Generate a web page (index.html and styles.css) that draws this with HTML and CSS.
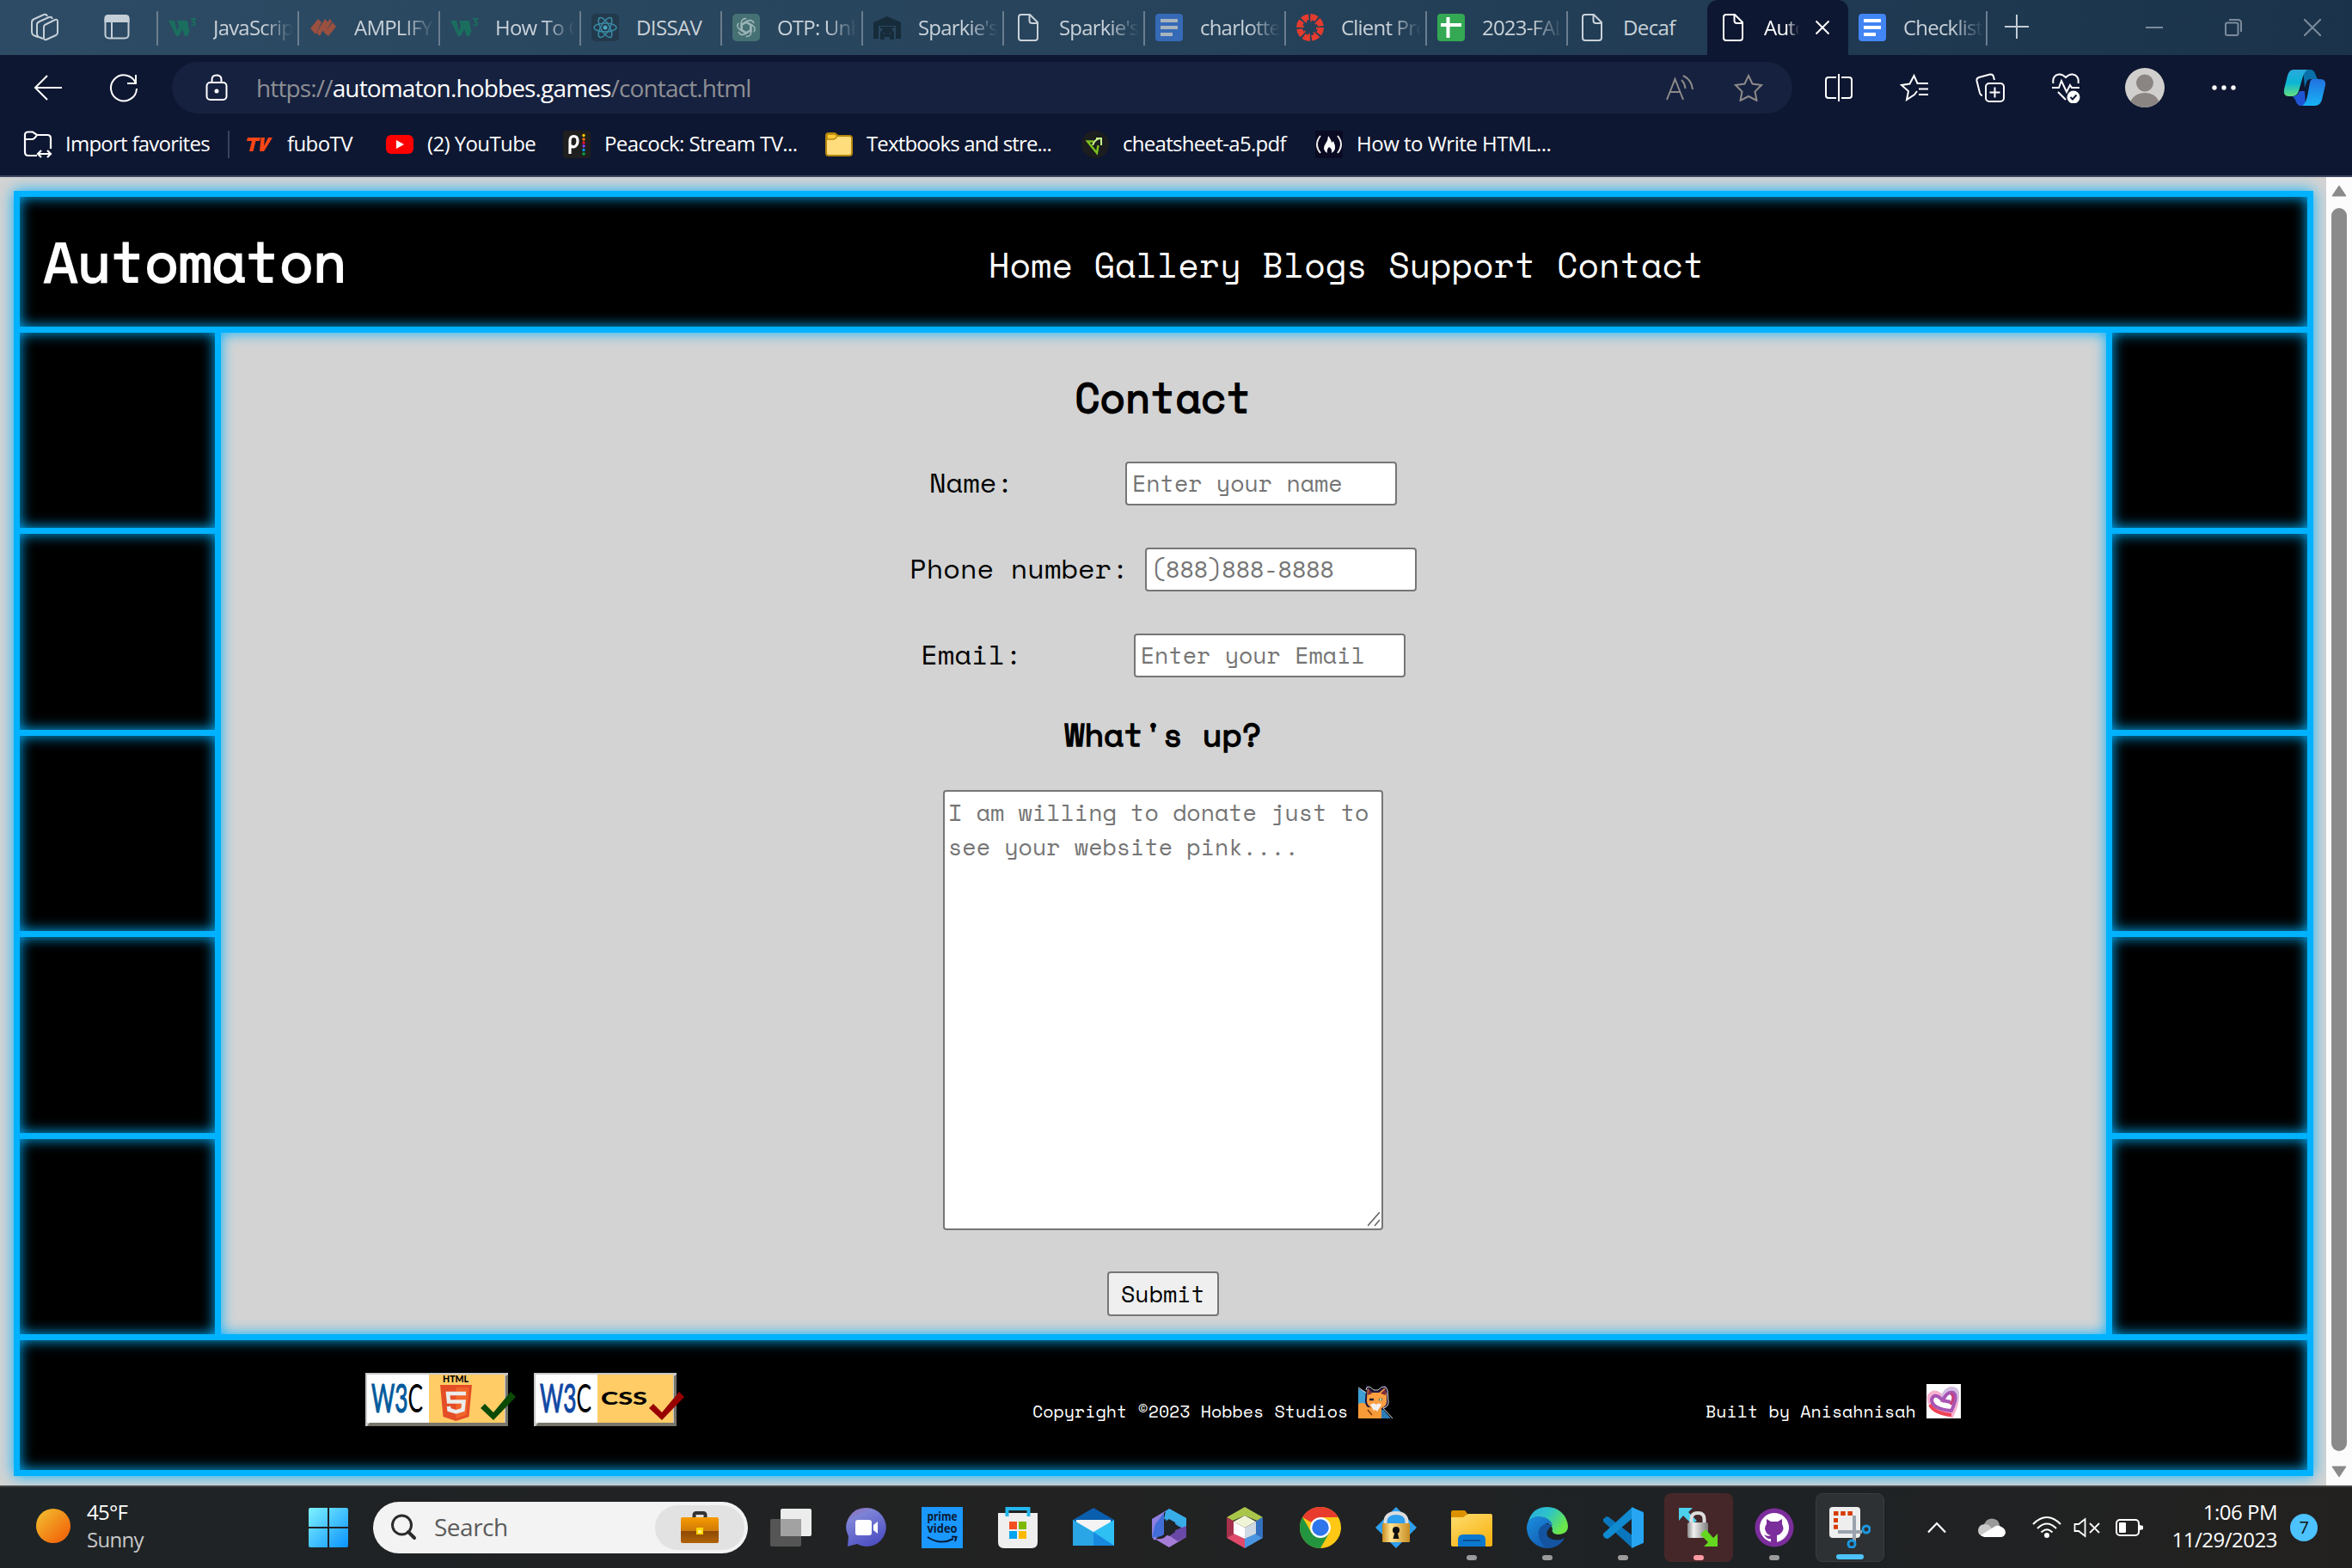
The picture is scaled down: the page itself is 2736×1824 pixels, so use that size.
FILE: index.html
```html
<!DOCTYPE html>
<html lang="en">
<head>
<meta charset="utf-8">
<title>Automaton - Contact</title>
<link rel="stylesheet" href="styles.css">
</head>
<body>
<svg class="defs" width="0" height="0">
  <defs>
    <symbol id="page" viewBox="0 0 24 32"><path d="M4 1H14L23 10V28Q23 31 20 31H4Q1 31 1 28V4Q1 1 4 1ZM13.500 1V8Q13.500 11 16.500 11H23" fill="none" stroke="currentColor" stroke-width="2"/></symbol>
    <symbol id="docs" viewBox="0 0 32 32"><rect width="32" height="32" rx="4" fill="#4285f4"/><path d="M6 8H26M6 16H26M6 24H20" stroke="#fff" stroke-width="4"/></symbol>
    <symbol id="w3" viewBox="0 0 32 32"><path d="M0 8H7L10 20L12 14L10 8H22L24 20L26 17L22 26L19 26L16 18L12 26H9Z" fill="#1a6e5e"/><path d="M26 6H31L28.500 9.500Q31 10 31 12Q30 14 26.500 13" fill="none" stroke="#1a6e5e" stroke-width="1.800"/></symbol>
    <linearGradient id="win" x2="1" y2="1"><stop stop-color="#7ff2ff"/><stop offset="1" stop-color="#0a93ff"/></linearGradient>
    <linearGradient id="sun" x2="1" y2="1"><stop stop-color="#f2c432"/><stop offset=".8" stop-color="#f26c0d"/></linearGradient>
    <linearGradient id="edgeTop" x2="1" y2=".5"><stop stop-color="#2ba9e0"/><stop offset=".5" stop-color="#2cc3c8"/><stop offset="1" stop-color="#6be84a"/></linearGradient>
    <linearGradient id="edgeLow" x2="1" y2="1"><stop stop-color="#1a8fe0"/><stop offset="1" stop-color="#114a9e"/></linearGradient>
    <linearGradient id="cpA" x2="0" y2="1"><stop stop-color="#2aa8dc"/><stop offset=".5" stop-color="#0bb5d5"/><stop offset="1" stop-color="#66e07e"/></linearGradient>
    <linearGradient id="cpB" x2="0" y2="1"><stop stop-color="#2272df"/><stop offset="1" stop-color="#17b4f6"/></linearGradient>
    <linearGradient id="gold" x2="1" y2="0"><stop stop-color="#c98a1c"/><stop offset=".3" stop-color="#ffe393"/><stop offset="1" stop-color="#c78d22"/></linearGradient>
    <linearGradient id="steel" x2="1" y2="0"><stop stop-color="#8b8b8b"/><stop offset=".3" stop-color="#f1f1f1"/><stop offset="1" stop-color="#7c7c7c"/></linearGradient>
    <linearGradient id="chat" x2=".5" y2="1"><stop stop-color="#9a68a8"/><stop offset=".3" stop-color="#7d83d6"/><stop offset="1" stop-color="#5052c4"/></linearGradient>
    <linearGradient id="case" x2="0" y2="1"><stop stop-color="#f89a00"/><stop offset=".52" stop-color="#cf7b08"/><stop offset=".54" stop-color="#8f4a03"/><stop offset="1" stop-color="#b06207"/></linearGradient>
    <linearGradient id="fold" x2=".7" y2="1"><stop stop-color="#ffdd70"/><stop offset="1" stop-color="#f8b414"/></linearGradient>
  </defs>
</svg>

<header class="browser">
  <div class="tabs">
    <div class="tools">
      <svg width="34" height="34" viewBox="0 0 34 34" class="line"><path d="M9 28L4 26Q2 25 2 22V11Q2 8 5 7L16 2Q19 1 20 4M15 30L10 28Q8 27 8 24V14Q8 11 11 10L22 5Q25 4 26 7M17 14L29 8Q32 7 32 10V23Q32 25 30 26L19 31Q16 32 16 29V17Q16 15 17 14Z"/></svg>
      <svg width="30" height="30" viewBox="0 0 30 30" class="line"><rect x="1.500" y="1.500" width="27" height="26" rx="4"/><path d="M1.500 4Q1.500 1 5 1H25Q28.500 1 28.500 4V8H1.500Z" fill="currentColor"/><path d="M9 8V28"/></svg>
    </div>
    <div class="tab dim"><svg class="fav"><use href="#w3"/></svg><span class="fade">JavaScrip</span></div>
    <div class="tab dim"><svg class="fav" viewBox="0 0 32 32"><g fill="#9a5040"><path d="M10 6L14 10L7 24L1 17Z"/><path d="M18 6L21 9L12 26L8 22Z"/><path d="M27 10L31 15L22 26L17 22Z"/><path d="M24 6L26 9L18 22L14 18Z"/></g></svg><span class="fade">AMPLIFY</span></div>
    <div class="tab dim"><svg class="fav"><use href="#w3"/></svg><span class="fade">How To C</span></div>
    <div class="tab dim"><svg class="fav" viewBox="0 0 32 32"><rect width="32" height="32" rx="5" fill="#233a4c"/><g fill="none" stroke="#3a8aa5" stroke-width="1.500"><ellipse cx="16" cy="16" rx="13" ry="5"/><ellipse cx="16" cy="16" rx="13" ry="5" transform="rotate(60 16 16)"/><ellipse cx="16" cy="16" rx="13" ry="5" transform="rotate(120 16 16)"/></g><circle cx="16" cy="16" r="2.500" fill="#4ba3bd"/></svg><span>DISSAV</span></div>
    <div class="tab dim"><svg class="fav" viewBox="0 0 32 32"><rect width="32" height="32" rx="5" fill="#467174"/><g fill="none" stroke="#9cb5b8" stroke-width="1.600"><path id="petal" d="M16 10L21 13V20L15 23.500Q9 26 7 21"/><use href="#petal" transform="rotate(60 16 16)"/><use href="#petal" transform="rotate(120 16 16)"/><use href="#petal" transform="rotate(180 16 16)"/><use href="#petal" transform="rotate(240 16 16)"/><use href="#petal" transform="rotate(300 16 16)"/></g></svg><span class="fade">OTP: Unb</span></div>
    <div class="tab dim"><svg class="fav" viewBox="0 0 32 32"><path d="M0 10L16 3L32 10V29H26V14H6V29H0Z" fill="#172c3b"/><path d="M8 16H24M9 29V22L12 18H20L23 22V29H20V26H12V29Z" fill="#172c3b" stroke="#172c3b" stroke-width="2"/><path d="M12 23H13M19 23H20" stroke="#28465b" stroke-width="2"/></svg><span class="fade">Sparkie's</span></div>
    <div class="tab dim"><svg class="fav pg"><use href="#page"/></svg><span class="fade">Sparkie's</span></div>
    <div class="tab dim"><svg class="fav half"><use href="#docs"/></svg><span class="fade">charlotte</span></div>
    <div class="tab dim"><svg class="fav" viewBox="0 0 32 32"><circle cx="16" cy="16" r="12.500" fill="none" stroke="#e43b2e" stroke-width="7" stroke-dasharray="7.800 2"/><circle cx="16" cy="16" r="8" fill="none" stroke="#e43b2e" stroke-width="2" stroke-dasharray="2 4.300"/></svg><span class="fade">Client Pro</span></div>
    <div class="tab dim"><svg class="fav" viewBox="0 0 32 32"><rect width="32" height="32" rx="4" fill="#34a853"/><path d="M12.500 4V28M4 13H28" stroke="#fff" stroke-width="4"/></svg><span class="fade">2023-FAL</span></div>
    <div class="tab dim"><svg class="fav pg"><use href="#page"/></svg><span>Decaf</span></div>
    <div class="tab active"><svg class="fav pg"><use href="#page"/></svg><span class="fade short">Auto</span><svg width="18" height="18" viewBox="0 0 18 18"><path d="M1.500 1.500L16.500 16.500M16.500 1.500L1.500 16.500" stroke="#fff" stroke-width="2"/></svg></div>
    <div class="tab dim last"><svg class="fav"><use href="#docs"/></svg><span class="fade">Checklist</span></div>
    <div class="plus"><svg width="28" height="28" viewBox="0 0 28 28"><path d="M14 0V28M0 14H28" stroke="#c3ccd4" stroke-width="2"/></svg></div>
    <div class="window">
      <svg width="20" height="20" viewBox="0 0 20 20"><path d="M0 10H20"/></svg>
      <svg width="20" height="20" viewBox="0 0 20 20"><rect x="1" y="4.500" width="14.500" height="14.500" rx="2"/><path d="M5 1H15Q19 1 19 5V15"/></svg>
      <svg width="20" height="20" viewBox="0 0 20 20"><path d="M0 0L20 20M20 0L0 20"/></svg>
    </div>
  </div>

  <div class="toolbar">
    <svg class="back" width="34" height="30" viewBox="0 0 34 30"><path d="M16 1L2 15L16 29M2 15H33"/></svg>
    <svg class="reload" width="34" height="34" viewBox="0 0 34 34"><path d="M31 12A15 15 0 1 0 32 18M31 2V12H21"/></svg>
    <div class="address">
      <svg class="lock" width="26" height="32" viewBox="0 0 26 32"><rect x="1.500" y="10" width="23" height="20" rx="4"/><path d="M7.500 10V6.500Q7.500 1.500 13 1.500T18.500 6.500V10"/><circle cx="13" cy="20" r="1.500" fill="#fff"/></svg>
      <p>https://<b>automaton.hobbes.games</b>/contact.html</p>
      <svg width="32" height="30" viewBox="0 0 32 30"><path d="M1 29L10.500 5L20 29M4.500 20H16.500M18 6Q22 10 22.500 16M20 1Q30 6 31 17"/></svg>
      <svg width="34" height="32" viewBox="0 0 34 32"><path d="M17 2L21.500 11.500L32 13L24.500 20.500L26.500 31L17 26L7.500 31L9.500 20.500L2 13L12.500 11.500Z"/></svg>
    </div>
    <div class="actions">
      <svg width="32" height="32" viewBox="0 0 32 32"><path d="M13 4H4Q1 4 1 7V25Q1 28 4 28H13M19 4H28Q31 4 31 7V25Q31 28 28 28H19M16 0V32"/></svg>
      <svg width="34" height="32" viewBox="0 0 34 32"><path d="M20 20L17 24L8 30L10 20L2 13L11.500 11.500L16.500 2L20.500 11H33M22 17.500H33M22 24H33"/></svg>
      <svg width="34" height="34" viewBox="0 0 34 34"><rect x="12" y="12" width="21" height="21" rx="4"/><path d="M22.500 16.500V28.500M16.500 22.500H28.500M8 26Q6 26 5 23L1.500 9Q1 6 4 5L17 1.500Q20 1 21 4L22 8"/></svg>
      <svg width="34" height="36" viewBox="0 0 34 36"><path d="M2.500 13Q1 4 9 2.500Q13 2 17 6Q21 2 25 2.500Q33 4 31.500 13M1 18H9L12 10L18 23L22 15L24 18H33M8 23L17 32"/><circle cx="26" cy="29" r="7.500" fill="#fff" stroke="none"/><path d="M22.500 29L25 31.500L29.500 26.500" stroke="#0e1731"/></svg>
      <svg width="46" height="46" viewBox="0 0 46 46"><clipPath id="av"><circle cx="23" cy="23" r="23"/></clipPath><g clip-path="url(#av)" stroke="none"><rect width="46" height="46" fill="#d1cfcd"/><circle cx="23" cy="17.500" r="10" fill="#8a8582"/><ellipse cx="23" cy="43" rx="17" ry="14" fill="#8a8582"/></g></svg>
      <svg width="28" height="6" viewBox="0 0 28 6"><g fill="#fff" stroke="none"><circle cx="3" cy="3" r="2.700"/><circle cx="14" cy="3" r="2.700"/><circle cx="25" cy="3" r="2.700"/></g></svg>
      <svg width="50" height="44" viewBox="0 0 50 44"><g stroke="none"><path d="M23 1H32Q36 1 38 8L40 12H32Q28 12 27 16L25 22Z" fill="#0a6fa8"/><path d="M12 1H28Q24 4 22 12L18 26Q16 32 10 32H6Q0 32 1 24L5 8Q7 1 12 1Z" fill="url(#cpA)"/><path d="M11 32Q17 32 19 26L25 26L26 43H20Q16 43 14 36Z" fill="#1f55d4"/><path d="M34 12H43Q50 12 49 19L45 36Q43 43 37 43H22Q26 41 28 32L31 16Q32 12 34 12Z" fill="url(#cpB)"/></g></svg>
    </div>
  </div>

  <div class="bookmarks">
    <div class="bm first"><svg width="34" height="32" viewBox="0 0 34 32"><path d="M16 29H6Q2 29 2 25V5Q2 1.500 6 1.500H11L16 5H28Q32 5 32 9V21M2 10H10Q13 10 16 5M17 27H32M21 23L17 27L21 31M28 23L32 27L28 31" fill="none" stroke="#fff" stroke-width="2.200"/></svg><span>Import favorites</span></div>
    <div class="bm w2"><svg width="32" height="32" viewBox="0 0 32 32"><path d="M2 8H17L16 12H11.500L8.500 24H4L7 12H1ZM17.500 8H22L21 18L26 8H31L21 24H16Z" fill="#fa4616"/></svg><span>fuboTV</span></div>
    <div class="bm w3"><svg width="32" height="32" viewBox="0 0 32 32"><rect y="5" width="32" height="22" rx="6" fill="#f00"/><path d="M12 11V21L21 16Z" fill="#fff"/></svg><span>(2) YouTube</span></div>
    <div class="bm w4"><svg width="32" height="32" viewBox="0 0 32 32"><rect width="32" height="32" rx="3" fill="#1f1f1f"/><path d="M8 27V12Q8 6.500 12.500 6.500T17 12T12.500 19Q10 19 9 17" fill="none" stroke="#fff" stroke-width="3.200"/><g><circle cx="24" cy="5.500" r="1.700" fill="#fc0"/><circle cx="24" cy="10" r="1.700" fill="#f70"/><circle cx="24" cy="14" r="1.700" fill="#e13"/><circle cx="24" cy="18" r="1.700" fill="#84f"/><circle cx="24" cy="22.500" r="1.700" fill="#09d"/><circle cx="24" cy="27" r="1.700" fill="#0a4"/></g></svg><span>Peacock: Stream TV...</span></div>
    <div class="bm w5"><svg width="32" height="32" viewBox="0 0 32 32"><path d="M4 3H11L15 6H28Q31 6 31 9V26Q31 29 28 29H4Q1 29 1 26V6Q1 3 4 3Z" fill="#ffdc7c" stroke="#b4870d" stroke-width="2"/><path d="M2 4H11L14 6Q12 10 9 10H2Z" fill="#ffca35" stroke="#b4870d" stroke-width="1.500"/></svg><span>Textbooks and stre...</span></div>
    <div class="bm w6"><svg width="32" height="32" viewBox="0 0 32 32"><circle cx="16" cy="16" r="16" fill="#1b1d1e"/><path d="M14 12.500H7L18 26L19.500 17" fill="none" stroke="#7cc220" stroke-width="2.400"/><path d="M13 17Q15 10 22 9M17 9H23V17" fill="none" stroke="#c8f090" stroke-width="2"/></svg><span>cheatsheet-a5.pdf</span></div>
    <div class="bm"><svg width="32" height="32" viewBox="0 0 32 32"><rect width="32" height="32" fill="#0a0a23"/><path d="M6 6Q-2 16 6 26M26 6Q34 16 26 26" fill="none" stroke="#eee" stroke-width="2"/><path d="M15 6Q19 11 19 14L21 12Q26 22 19 26Q20 21 16 19Q13 22 14 26Q7 22 12 15Q15 11 15 6Z" fill="#fff"/></svg><span>How to Write HTML...</span></div>
  </div>
</header>

<div class="viewport">
  <div class="frame">
    <header class="site-head">
      <h1>Automaton</h1>
      <nav><a>Home</a> <a>Gallery</a> <a>Blogs</a> <a>Support</a> <a>Contact</a></nav>
    </header>
    <aside><i></i><i></i><i></i><i></i><i></i></aside>
    <main>
      <h2>Contact</h2>
      <form>
        <div class="row wide"><label for="n">Name:</label><input id="n" placeholder="Enter your name"></div>
        <div class="row"><label for="p">Phone number:</label><input id="p" placeholder="(888)888-8888"></div>
        <div class="row wide"><label for="e">Email:</label><input id="e" placeholder="Enter your Email"></div>
        <h3>What's up?</h3>
        <div class="message"><textarea placeholder="I am willing to donate just to see your website pink...."></textarea><svg class="grip" width="14" height="17" viewBox="0 0 14 17"><path d="M0 16L14 0M8 16L14 9" stroke="#666" stroke-width="1.600"/></svg></div>
        <button type="button">Submit</button>
      </form>
    </main>
    <aside><i></i><i></i><i></i><i></i><i></i></aside>
    <footer>
      <div class="badges">
        <svg width="176" height="62" viewBox="0 0 176 62"><rect width="166" height="62" fill="#c9c9c9"/><path d="M2 62H166V2L163 4V58H5Z" fill="#77756c"/><rect x="2" y="2" width="72" height="56" fill="#fff"/><rect x="74" y="2" width="88" height="56" fill="#fc6"/><text x="7" y="46" class="w3c" textLength="60" lengthAdjust="spacingAndGlyphs" fill="#005a9c" stroke="#005a9c">W3<tspan fill="#000" stroke="none">C</tspan></text><text x="90" y="11" class="htm" textLength="30" lengthAdjust="spacingAndGlyphs">HTML</text><path d="M87 14H124L120.500 51L105.500 56L90.500 51Z" fill="#e44d26"/><path d="M105.500 17H120.500L117.500 49L105.500 53Z" fill="#f16529"/><path d="M117 24H96L97 33.500H114.500L113.500 43L105.500 45.500L97.500 43L97 39" fill="none" stroke="#ebebeb" stroke-width="4.500"/><path d="M134 41L139 36L149 46L169 22L175 28L149 55Z" fill="#0b4a05"/></svg>
        <svg width="176" height="62" viewBox="0 0 176 62"><rect width="166" height="62" fill="#c9c9c9"/><path d="M2 62H166V2L163 4V58H5Z" fill="#77756c"/><rect x="2" y="2" width="72" height="56" fill="#fff"/><rect x="74" y="2" width="88" height="56" fill="#fc6"/><text x="7" y="46" class="w3c" textLength="60" lengthAdjust="spacingAndGlyphs" fill="#1048a4" stroke="#1048a4">W3<tspan fill="#000" stroke="none">C</tspan></text><text x="78" y="37" class="css" textLength="54" lengthAdjust="spacingAndGlyphs">CSS</text><path d="M134 41L139 36L149 46L169 22L175 28L149 55Z" fill="#900"/></svg>
      </div>
      <div class="credit">Copyright ©2023 Hobbes Studios <svg width="40" height="40" viewBox="0 0 40 40"><path d="M0 5L10 10L14 38H0Z" fill="#3e9fd6"/><path d="M27 27L38 40H24Z" fill="#2b7cb8"/><path d="M0 23Q8 20 13 27L27 40H0Z" fill="#f79a38"/><path d="M10 3L16 9H24L31 3L34 12V21Q34 28 22 31Q8 28 9 18Z" fill="#ff9f41" stroke="#201840" stroke-width="2"/><path d="M11 27L27 28V40H11Z" fill="#f79a38"/><path d="M9 7Q10 -1 18 7H23Q31 -1 34 7L35 20Q36 26 29 28L40 40M0 4L9 10" fill="none" stroke="#ddd" stroke-width="1"/><path d="M12 5L16 11L11 13ZM32 5L26 11L32 13Z" fill="#7c2f3c"/><path d="M13 18H18M24 18H28" stroke="#282334" stroke-width="2.500"/><circle cx="26" cy="18" r="1.500" fill="#bde0a0"/><path d="M14 24Q18 21 21 24Q24 21 27 24L22 32L20 30L18 31Z" fill="#f3f0f0"/><path d="M11 30L16 36" stroke="#7a3b12" stroke-width="1.500"/></svg></div>
      <div class="credit built">Built by Anisahnisah <svg width="40" height="40" viewBox="0 0 40 40"><rect width="40" height="40" fill="#fff"/><path d="M19 17Q10 6 4 14Q1 28 29 36Q39 15 32 7Q25 3 19 17Z" fill="none" stroke="#f8b1d0" stroke-width="6"/><path d="M18 18Q24 3 33 7Q37 10 33 21" fill="none" stroke="#d2bde2" stroke-width="6"/><path d="M4 24Q9 34 29 36" fill="none" stroke="#ee4456" stroke-width="4"/><path d="M19 19Q9 9 6 18Q6 29 29 31Q37 14 31 10Q24 8 19 19L28 21" fill="none" stroke="#a855b4" stroke-width="4"/><path d="M28 11Q34 14 28 24" fill="none" stroke="#c83f78" stroke-width="3"/></svg></div>
    </footer>
  </div>
  <div class="scroll">
    <svg width="18" height="14" viewBox="0 0 18 14"><path d="M9 1L17 13H1Z" fill="#8a8a8a" stroke="#8a8a8a" stroke-linejoin="round"/></svg>
    <div class="thumb"></div>
    <svg width="18" height="14" viewBox="0 0 18 14"><path d="M9 13L17 1H1Z" fill="#8a8a8a" stroke="#8a8a8a" stroke-linejoin="round"/></svg>
  </div>
</div>

<footer class="taskbar">
  <div class="weather"><svg width="40" height="40" viewBox="0 0 40 40"><circle cx="20" cy="20" r="20" fill="url(#sun)"/></svg><p>45°F<br><span>Sunny</span></p></div>
  <svg class="start" width="46" height="46" viewBox="0 0 46 46"><path d="M2 0H22V22H0V2Q0 0 2 0ZM24 0H44Q46 0 46 2V22H24ZM0 24H22V46H2Q0 46 0 44ZM24 24H46V44Q46 46 44 46H24Z" fill="url(#win)"/></svg>
  <div class="search">
    <svg width="30" height="32" viewBox="0 0 30 32"><circle cx="12.500" cy="13" r="11" fill="none" stroke="#2b2b2b" stroke-width="3"/><path d="M20 21L27 28" stroke="#2b2b2b" stroke-width="4" stroke-linecap="round"/></svg>
    <span>Search</span>
    <div class="chip"><svg width="44" height="38" viewBox="0 0 44 38"><path d="M15.500 8V4.500Q15.500 2 18 2H26Q28.500 2 28.500 4.500V8" fill="none" stroke="#333" stroke-width="4"/><rect y="7" width="44" height="30" rx="2" fill="url(#case)"/><rect x="18" y="19" width="8" height="8" fill="#ffd500"/><path d="M20 22H24V25H20Z" fill="#fff08a"/></svg></div>
  </div>
  <div class="apps">
    <div class="app"><svg viewBox="0 0 48 48"><rect x="12" y="2" width="36" height="32" rx="2" fill="#ececec"/><rect y="14" width="36" height="32" rx="2" fill="#555"/><path d="M12 14H36V34H12Z" fill="#a2a2a2"/></svg></div>
    <div class="app"><svg viewBox="0 0 48 48"><path d="M24 1A22.500 22.500 0 1 1 13 43L2 46L3 34A22.500 22.500 0 0 1 24 1Z" fill="url(#chat)"/><rect x="11" y="15" width="19" height="18" rx="3" fill="#fff"/><path d="M32 21L37 17V31L32 27Z" fill="#fff"/></svg></div>
    <div class="app"><svg viewBox="0 0 48 48"><rect width="48" height="48" fill="#1a98ff"/><g class="prime"><text x="6.500" y="16" textLength="35" lengthAdjust="spacingAndGlyphs">prime</text><text x="6.500" y="29.500" textLength="35" lengthAdjust="spacingAndGlyphs">video</text></g><path d="M7 35Q22 45 37 37M35 34.500L40.500 35L39 40" fill="none" stroke="#0a1a33" stroke-width="2"/></svg></div>
    <div class="app"><svg viewBox="0 0 48 48"><path d="M1 7H47V41Q47 48 40 48H8Q1 48 1 41Z" fill="#efefef"/><path d="M11.500 11V2H36.500V11" fill="none" stroke="#23b7ee" stroke-width="4"/><path d="M14 17H23V26H14Z" fill="#f25022"/><path d="M25 17H34V26H25Z" fill="#7fba00"/><path d="M14 28H23V37H14Z" fill="#00a4ef"/><path d="M25 28H34V37H25Z" fill="#ffb900"/></svg></div>
    <div class="app"><svg viewBox="0 0 48 48"><path d="M0 15L24 1L48 15V20H0Z" fill="#0a5eae"/><path d="M4 15H44V26L24 35L4 26Z" fill="#f4f4f4"/><path d="M0 15L24 29L48 15V45H0Z" fill="#2fc0f3"/><path d="M0 15L48 45H0Z" fill="#2aa5e5"/><path d="M24 29L48 45H24Z" fill="#178adf"/></svg></div>
    <div class="app"><svg viewBox="0 0 48 48"><path d="M24 2L18 7V27L7 39L4 35V14Z" fill="#8d7ee0"/><path d="M24 2L44 13V27L34 22L24 14L18 20L12 28L4 35L18 24Z" fill="#3d9ee8"/><path d="M24 2L44 13V26L31 17L18 14L20 5Z" fill="#38aee9"/><path d="M4 35Q12 36 18 32L18 24V7L8 20Z" fill="#416ed8"/><path d="M44 22V35L24 47L7 37Q17 38 20 34L32 27Z" fill="#a57cd6"/><path d="M44 22V35L34 40L24 33L32 27Z" fill="#6948a8"/><path d="M24 14L31 18V29L24 34L18 29V18Z" fill="#202428"/></svg></div>
    <div class="app"><svg viewBox="0 0 48 48"><path d="M24 0L45 12L38 16L24 10L10 16L3 12Z" fill="#a9c64b"/><path d="M3 12L12 17V31L3 36Z" fill="#a5304a"/><path d="M3 36L12 31L24 37V48Z" fill="#e0496a"/><path d="M45 12L36 17V31L45 36Z" fill="#3470c0"/><path d="M45 36L36 31L24 37V48Z" fill="#4a95e2"/><path d="M24 10L37 17L24 24L11 17Z" fill="#f1f5d7"/><path d="M11 17L24 24V37L11 31Z" fill="#fff"/><path d="M37 17L24 24V37L37 31Z" fill="#cfd9e3"/></svg></div>
    <div class="app"><svg viewBox="0 0 48 48"><circle cx="24" cy="24" r="24" fill="#ffc815"/><path d="M24 24L3.200 12A24 24 0 0 1 44.800 12H24Z" fill="#e83b2e"/><path d="M3.200 12A24 24 0 0 0 24 48L34.400 30L13.600 30Z" fill="#24953f"/><circle cx="24" cy="24" r="12" fill="#fff"/><circle cx="24" cy="24" r="9.700" fill="#2f76ec"/></svg></div>
    <div class="app"><svg viewBox="0 0 48 48"><path d="M24 0L48 24L24 48L0 24Z" fill="#2f9ff0"/><path d="M11.500 21V17Q12 7 24 7T36.500 17V21" fill="none" stroke="#ddd" stroke-width="4"/><rect x="8" y="19" width="32" height="22" rx="1" fill="url(#gold)"/><circle cx="24" cy="27" r="4" fill="#111"/><path d="M23 27L20.500 37H27.500L25 27Z" fill="#111"/></svg></div>
    <div class="app run"><svg viewBox="0 0 48 48"><path d="M0 6Q0 4 2 4H16L20 9V18H0Z" fill="#dc9200"/><path d="M0 12H14L20 8H46Q48 8 48 10V44Q48 46 46 46H2Q0 46 0 44Z" fill="url(#fold)"/><path d="M8 46V38Q8 32 14 32H34Q40 32 40 38V46Z" fill="#0b78cf"/><path d="M14 39H34" stroke="#0a4d92" stroke-width="2"/></svg></div>
    <div class="app run"><svg viewBox="0 0 48 48"><path d="M24 0A24 24 0 0 1 48 22Q48 32 36 32Q28 31 30 25Q28 17 14 14Q6 14 1 20Q5 0 24 0Z" fill="url(#edgeTop)"/><path d="M0 25Q0 11 15 11Q27 12 30 21Q24 16 20 22Q16 32 26 38Q36 42 44 36Q37 48 24 48A24 24 0 0 1 0 25Z" fill="url(#edgeLow)"/><path d="M30 21Q19 16 14 27Q12 39 23 48Q38 48 44 36Q36 41 26 36Q19 30 30 21Z" fill="#14539f"/></svg></div>
    <div class="app run"><svg viewBox="0 0 48 48"><path d="M34 1L48 6V42L34 47L1 17V14L5 11Q7 11 9 13L36 34Z" fill="#0a76bd"/><path d="M34 1V14L8 36Q5 38 3 36L1 34V31Z" fill="#108ad0"/><path d="M34 0L47 6Q48 7 48 8V41L47 42L34 48Z" fill="#27a5f2"/></svg></div>
    <div class="app run alert"><svg viewBox="0 0 48 48"><path d="M1 1H17L12 6L22 16L16 20L6 10L1 16Z" fill="#4cd0ee"/><path d="M15.500 20V14Q15.500 7 23 7T30.500 14V20" fill="none" stroke="#ddd" stroke-width="4"/><rect x="11" y="18" width="24" height="18" rx="2" fill="url(#steel)"/><path d="M32 26L41 36L46 31V46H30L35 41L26 32Z" fill="#64d81e"/></svg></div>
    <div class="app run"><svg viewBox="0 0 48 48"><circle cx="24" cy="24" r="22.500" fill="#7c2d9c"/><circle cx="24" cy="24" r="17" fill="#fff"/><path d="M15 14L20 17H28L33 14V20Q36 25 33 29Q31 32 27 33V41H20V37Q15 38 12 32Q16 35 20 33Q14 32 13 25Q13 22 15 20Z" fill="#7c2d9c"/></svg></div>
    <div class="app run focus"><svg viewBox="0 0 48 48"><rect width="36" height="36" rx="4" fill="#eee"/><path d="M5 7.500H27" stroke="#d83b01" stroke-width="5" stroke-dasharray="5.500 2.700"/><path d="M7.500 13V26" stroke="#d83b01" stroke-width="5" stroke-dasharray="5 2.700"/><path d="M10 29H38M29 10V40" fill="none" stroke="#9aa3ad" stroke-width="4"/><g fill="none" stroke="#1c97e0" stroke-width="3"><ellipse cx="43" cy="26" rx="4" ry="4"/><ellipse cx="26" cy="43" rx="4" ry="4"/></g></svg></div>
  </div>
  <div class="tray">
    <svg width="22" height="14" viewBox="0 0 22 14"><path d="M1 12.500L11 2L21 12.500" fill="none" stroke="#fff" stroke-width="2.200"/></svg>
    <svg width="34" height="24" viewBox="0 0 34 24"><path d="M8 8Q12 0 20 2Q26 4 26 10L14 18Z" fill="#9b9b9b"/><path d="M8 22Q1 22 1 15Q2 8 9 8Q14 8 16 12L24 19Z" fill="#c9c9c9"/><path d="M4 21L20 11Q24 8 28 11Q33 13 33 18Q32 23 27 23H8Z" fill="#fff"/></svg>
    <svg width="34" height="26" viewBox="0 0 34 26"><g fill="none" stroke="#fff" stroke-width="2"><path d="M1 9Q17 -7 33 9M6 14Q17 3 28 14M10.500 18.500Q17 12 23.500 18.500"/></g><circle cx="17" cy="22" r="3" fill="#fff"/></svg>
    <svg width="32" height="24" viewBox="0 0 32 24"><path d="M1.500 8H6L13.500 2V22L6 16H1.500ZM19 7L30 18M30 7L19 18" fill="none" stroke="#fff" stroke-width="1.800"/></svg>
    <svg width="32" height="20" viewBox="0 0 32 20"><rect x="1" y="1" width="26" height="18" rx="4" fill="none" stroke="#fff" stroke-width="2"/><rect x="4" y="4" width="8" height="12" rx="1" fill="#fff"/><path d="M28 7L32 8V12L28 13Z" fill="#fff"/></svg>
  </div>
  <p class="clock">1:06 PM<br>11/29/2023</p>
  <div class="count">7</div>
</footer>
</body>
</html>
```
FILE: styles.css
```css
* { box-sizing: border-box; }
body {
  margin: 0;
  width: 2736px;
  height: 1824px;
  overflow: hidden;
  display: flex;
  flex-direction: column;
  font-family: "Open Sans", "Noto Sans", sans-serif;
  background: #d3d3d3;
}
svg { display: block; flex: none; }
.defs { position: absolute; }
p, h1, h2, h3 { margin: 0; }

/* browser chrome */
.browser {
  height: 206px;
  background: #0e1731;
  border-bottom: 2px solid #3f475c;
  color: #fff;
  font-size: 24px;
  letter-spacing: -0.6px;
}
.tabs {
  height: 64px;
  display: flex;
  background: linear-gradient(90deg, #2d4b64, #26435b 50%, #1a334b);
}
.tools {
  width: 182px;
  display: flex;
  align-items: center;
  gap: 52px;
  padding-left: 35px;
  color: #c5cfd7;
}
.line { fill: none; stroke: currentColor; stroke-width: 2; }
.tab {
  width: 164px;
  height: 64px;
  padding-left: 14px;
  display: flex;
  align-items: center;
  position: relative;
  color: #c9d1d8;
}
.tab.last { width: 160px; padding-left: 12px; }
.dim::before {
  content: "";
  position: absolute;
  left: 0;
  top: 13px;
  width: 2px;
  height: 40px;
  background: #6b7d8e;
}
.active + .dim::before { display: none; }
.fav { width: 32px; height: 32px; margin-right: 20px; }
.fav.pg { width: 24px; margin-left: 4px; margin-right: 24px; }
.half { opacity: .6; }
.tab span { line-height: 32px; margin-top: -1px; white-space: nowrap; }
.fade {
  width: 93px;
  overflow: hidden;
  letter-spacing: -0.8px;
  -webkit-mask-image: linear-gradient(90deg, #000 62%, transparent);
  mask-image: linear-gradient(90deg, #000 62%, transparent);
}
.active {
  background: #0e1731;
  border-radius: 12px 12px 0 0;
  color: #fff;
}
.active .short { width: 41px; margin-right: 18px; }
.plus {
  border-left: 2px solid #6b7d8e;
  height: 40px;
  margin-top: 13px;
  padding: 4px 0 0 20px;
}
.window {
  flex: 1;
  display: flex;
  justify-content: flex-end;
  align-items: center;
  gap: 72px;
  padding-right: 36px;
  fill: none;
  stroke: #7b8b9b;
  stroke-width: 2;
}
.toolbar {
  height: 76px;
  display: flex;
  align-items: center;
  padding: 0 5px 8px 39px;
  fill: none;
  stroke: #fff;
  stroke-width: 2;
}
.toolbar .back { margin: 8px 54px 0 0; }
.toolbar .reload { margin: 8px 39px 0 0; }
.address {
  width: 1885px;
  height: 60px;
  margin-top: 8px;
  border-radius: 30px;
  background: #16213f;
  display: flex;
  align-items: center;
  padding: 0 34px 0 39px;
  color: #8d8f94;
  font-size: 28px;
  stroke: #8d8a89;
}
.address .lock { stroke: #fff; }
.address p { flex: 1; margin-left: 33px; line-height: 60px; letter-spacing: -0.86px; }
.address b { font-weight: 400; color: #fff; }
.address svg + svg { margin-left: 47px; }
.actions {
  flex: 1;
  display: grid;
  grid-template-columns: 88px 88px 88px 88px 96px 88px 100px;
  justify-content: end;
  justify-items: center;
  align-items: center;
  margin-top: 8px;
}
.bookmarks { height: 64px; display: flex; align-items: center; padding: 0 0 9px 27px; }
.bm { display: flex; align-items: center; height: 32px; line-height: 32px; white-space: nowrap; }
.bm svg { margin-right: 16px; }
.bm span { margin-top: -1px; }
.bm.first svg { margin-right: 15px; }
.first { width: 240px; border-right: 2px solid #3a435b; margin-right: 19px; letter-spacing: -0.75px; }
.w2 { width: 163px; }
.w3 { width: 206px; }
.w4 { width: 305px; }
.w5 { width: 298px; letter-spacing: -0.85px; }
.w6 { width: 272px; letter-spacing: -0.7px; }
.bm:last-child { letter-spacing: -0.5px; }

/* web page */
.viewport { height: 1522px; display: flex; overflow: hidden; background: #d3d3d3; }
.frame {
  width: 2675px;
  height: 1495px;
  margin: 16px 15px 0 16px;
  padding: 7px;
  display: grid;
  grid-template: 151px 1fr 151px / 227px 1fr 227px;
  gap: 7px;
  background: #00b2ff;
  box-shadow: 0 0 16px #00b2ff;
  font-family: "Space Mono", "DejaVu Sans Mono", "Liberation Mono", monospace;
  letter-spacing: 0;
}
.site-head, .frame footer, aside i { background: #000; box-shadow: inset 0 0 16px #00b2ff; }
.site-head, .frame footer { grid-column: 1 / -1; color: #fff; }
.site-head { display: flex; padding-left: 28px; }
.site-head h1 {
  width: 1099px;
  font-size: 64px;
  font-weight: 400;
  line-height: 74px;
  padding-top: 38px;
  -webkit-text-stroke: 2.2px #fff;
}
nav { font-size: 40px; line-height: 48px; padding-top: 55px; }
aside { display: grid; grid-template-rows: repeat(5, 1fr); gap: 7px; }
main {
  background: #d3d3d3;
  box-shadow: inset 0 0 16px #00b2ff;
  text-align: center;
  color: #000;
  padding-right: 1px;
}
h2 {
  font-size: 48px;
  font-weight: 400;
  line-height: 56px;
  padding-top: 47px;
  height: 150px;
  -webkit-text-stroke: 1.8px #000;
}
.row {
  height: 51px;
  margin-bottom: 49px;
  display: flex;
  justify-content: center;
  align-items: center;
  gap: 19px;
  font-size: 32px;
}
.wide { gap: 130px; }
.row label { line-height: 51px; height: 54px; }
input, textarea, button {
  font: 26.67px "Space Mono", "DejaVu Sans Mono", "Liberation Mono", monospace;
  border: 2px solid #767676;
  border-radius: 4px;
}
input { width: 316px; height: 51px; padding: 2px 6px 3px; background: #fff; }
::placeholder { color: #757575; opacity: 1; }
h3 {
  font-size: 37.44px;
  font-weight: 400;
  line-height: 46px;
  height: 83px;
  margin-top: -6px;
  -webkit-text-stroke: 1.5px #000;
}
.message { position: relative; width: 512px; height: 512px; margin: 5px auto 48px; }
textarea {
  display: block;
  width: 512px;
  height: 512px;
  padding: 4px;
  line-height: 40px;
  resize: none;
  overflow: hidden;
}
.grip { position: absolute; right: 4px; bottom: 4px; }
button { width: 130px; height: 52px; padding: 0; background: #efefef; color: #000; }
.frame footer {
  display: grid;
  grid-template-columns: 776px 783px 1fr;
  padding-left: 402px;
  font-size: 20px;
}
.badges { display: flex; gap: 20px; padding-top: 38px; }
.w3c { font: 400 46px Lato, sans-serif; stroke-width: 1.2; }
.htm, .css { font: 900 10px Lato, sans-serif; }
.htm { font-size: 12px; }
.css { font-size: 21px; }
.credit { display: flex; white-space: pre; line-height: 24px; padding-top: 71px; }
.credit svg { margin-top: -20px; }
.scroll {
  width: 30px;
  background: #fcfcfc;
  display: flex;
  flex-direction: column;
  align-items: center;
  padding: 9px 0;
}
.thumb { flex: 1; width: 18px; margin: 13px 0 17px; border-radius: 9px; background: #8a8a8a; }

/* taskbar */
.taskbar {
  height: 96px;
  border-top: 2px solid #424343;
  background: linear-gradient(90deg, #1e2326, #222222 45%, #1e2225 75%, #23211f);
  color: #fff;
  display: flex;
  align-items: center;
  font-size: 24px;
  line-height: 32px;
  letter-spacing: -0.5px;
}
.weather { display: flex; align-items: center; gap: 19px; width: 359px; padding-left: 42px; letter-spacing: -0.7px; }
.weather svg { margin-top: -4px; }
.weather p, .clock { margin-top: -4px; }
.weather span { color: #c8c8c8; }
.start { margin: 0 30px 0 0; }
.search {
  width: 436px;
  height: 60px;
  margin-left: -1px;
  border-radius: 30px;
  background: #f3f3f3;
  color: #5b5b5b;
  font-size: 28px;
  display: flex;
  align-items: center;
  padding: 0 4px 0 21px;
}
.search span { flex: 1; margin-left: 20px; margin-top: -2px; }
.chip {
  width: 104px;
  height: 52px;
  border-radius: 26px;
  background: #e2e2e2;
  display: flex;
  align-items: center;
  justify-content: center;
}
.apps { display: flex; gap: 8px; margin-left: 10px; }
.app {
  width: 80px;
  height: 80px;
  border-radius: 8px;
  display: flex;
  align-items: center;
  justify-content: center;
  position: relative;
}
.app svg { width: 48px; height: 48px; }
.prime { font: 700 14px "Open Sans", sans-serif; fill: #0a1a33; letter-spacing: 0; }
.run::after {
  content: "";
  position: absolute;
  bottom: 2px;
  left: 34px;
  width: 12px;
  height: 6px;
  border-radius: 3px;
  background: #9b9b9b;
}
.alert { background: #462729; }
.alert::after { background: #ff9aa2; }
.focus { background: #2e3133; border: 1px solid #3a3d3f; }
.focus::after { left: 23px; width: 32px; background: #4cc2ff; }
.tray { display: flex; align-items: center; margin-left: 50px; }
.tray svg + svg { margin-left: 36px; }
.tray svg:nth-child(3) { margin-left: 30px; }
.tray svg:nth-child(4) { margin-left: 14px; }
.tray svg:nth-child(5) { margin-left: 17px; }
.clock { flex: 1; text-align: right; }
.count {
  width: 32px;
  height: 32px;
  margin: 0 40px 0 15px;
  border-radius: 50%;
  background: #4cc2ff;
  color: #111;
  font-size: 20px;
  text-align: center;
}
```
